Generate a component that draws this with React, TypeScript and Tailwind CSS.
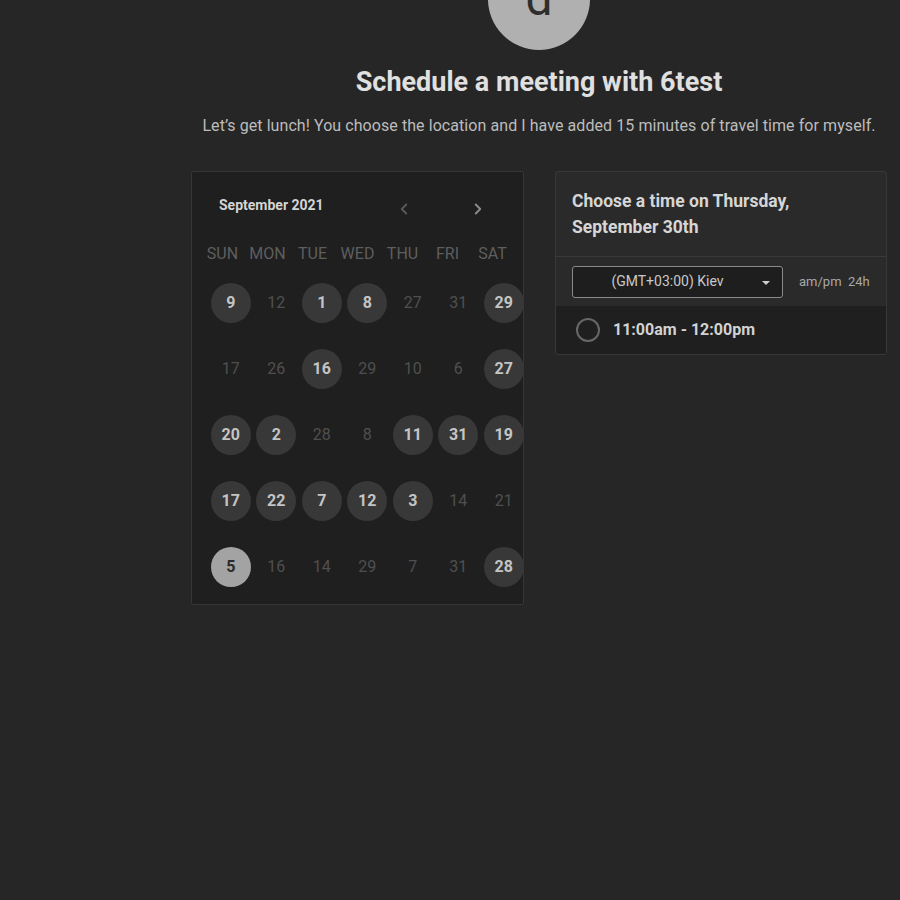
import { ChevronLeft, ChevronRight } from "lucide-react";

type Day = { n: number; open?: boolean; selected?: boolean };

const weekdays = ["SUN", "MON", "TUE", "WED", "THU", "FRI", "SAT"];

const weeks: Day[][] = [
  [{ n: 9, open: true }, { n: 12 }, { n: 1, open: true }, { n: 8, open: true }, { n: 27 }, { n: 31 }, { n: 29, open: true }],
  [{ n: 17 }, { n: 26 }, { n: 16, open: true }, { n: 29 }, { n: 10 }, { n: 6 }, { n: 27, open: true }],
  [{ n: 20, open: true }, { n: 2, open: true }, { n: 28 }, { n: 8 }, { n: 11, open: true }, { n: 31, open: true }, { n: 19, open: true }],
  [{ n: 17, open: true }, { n: 22, open: true }, { n: 7, open: true }, { n: 12, open: true }, { n: 3, open: true }, { n: 14 }, { n: 21 }],
  [{ n: 5, selected: true }, { n: 16 }, { n: 14 }, { n: 29 }, { n: 7 }, { n: 31 }, { n: 28, open: true }],
];

function DayCell({ day }: { day: Day }) {
  let cls = "text-[#4f4f4f] font-normal";
  if (day.open) cls = "bg-[#383838] text-[#c4c4c4] font-bold";
  if (day.selected) cls = "bg-[#a3a3a3] text-[#2a2a2a] font-bold";
  return (
    <div className="flex items-center justify-center h-[66px]">
      <div className={`w-10 h-10 rounded-full flex items-center justify-center text-[16px] ${cls}`}>
        {day.n}
      </div>
    </div>
  );
}

function Calendar() {
  return (
    <div className="w-[333px] h-[434px] shrink-0 bg-[#1f1f1f] border border-[#363636] rounded-[2px]">
      <div className="flex items-center h-[70px] pl-[27px]">
        <span className="text-[14px] font-bold text-[#d4d4d4] mb-[4px]">September 2021</span>
        <ChevronLeft className="ml-[71px] mt-[3px] w-[18px] h-[18px] text-[#5a5a5a]" strokeWidth={2.5} />
        <ChevronRight className="ml-[56px] mt-[3px] w-[18px] h-[18px] text-[#8c8c8c]" strokeWidth={2.5} />
      </div>
      <div className="grid grid-cols-[repeat(7,45px)] pl-[8px] h-[22px] items-center">
        {weekdays.map((w) => (
          <div key={w} className="text-center text-[16px] text-[#5e5e5e]">
            {w}
          </div>
        ))}
      </div>
      <div className="grid grid-cols-[repeat(7,45.5px)] pl-[16px] pt-[6px]">
        {weeks.flat().map((d, i) => (
          <DayCell key={i} day={d} />
        ))}
      </div>
    </div>
  );
}

function TimePanel() {
  return (
    <div className="w-[332px] shrink-0 bg-[#2a2a2a] border border-[#383838] rounded-[3px] overflow-hidden">
      <div className="px-4 py-[16px] border-b border-[#3a3a3a]">
        <p className="text-[17.5px] leading-[26px] font-bold text-[#d6d6d6]">
          Choose a time on Thursday,
          <br />
          September 30th
        </p>
      </div>
      <div className="flex items-center h-[49px] pl-4">
        <div className="relative w-[211px] h-8 bg-[#1e1e1e] border border-[#8a8a8a] rounded-[3px] flex items-center justify-center pr-[20px]">
          <span className="text-[14px] text-[#c8c8c8]">(GMT+03:00) Kiev</span>
          <span className="absolute right-[12px] top-[14px] w-0 h-0 border-l-[4px] border-r-[4px] border-t-[4px] border-l-transparent border-r-transparent border-t-[#cfcfcf]" />
        </div>
        <span className="ml-4 text-[13px] text-[#a8a8a8] whitespace-pre">am/pm  24h</span>
      </div>
      <div className="flex items-center h-[48px] bg-[#1f1f1f] pl-[20px]">
        <div className="w-6 h-6 rounded-full border-2 border-[#676767]" />
        <span className="ml-[13px] text-[16px] font-bold text-[#d2d2d2]">11:00am - 12:00pm</span>
      </div>
    </div>
  );
}

export default function App() {
  return (
    <div className="min-h-screen bg-[#262626] flex overflow-hidden font-['Roboto',sans-serif]">
      <div className="w-[178px] shrink-0" />
      <div className="flex-1 flex flex-col items-center">
        <div className="w-[102px] h-[102px] -mt-[52px] rounded-full bg-[#b0b0b0] flex items-center justify-center">
          <span className="text-[48px] leading-none text-[#2e2e2e]">d</span>
        </div>
        <h1 className="mt-[17px] text-[27px] font-bold text-[#e0e0e0] leading-[30px]">
          Schedule a meeting with 6test
        </h1>
        <p className="mt-[19px] text-[16px] tracking-[0.07px] text-[#bcbcbc] leading-5">
          Let’s get lunch! You choose the location and I have added 15 minutes of travel time for myself.
        </p>
        <div className="flex gap-[31px] mt-[35px] items-start">
          <Calendar />
          <TimePanel />
        </div>
      </div>
    </div>
  );
}
